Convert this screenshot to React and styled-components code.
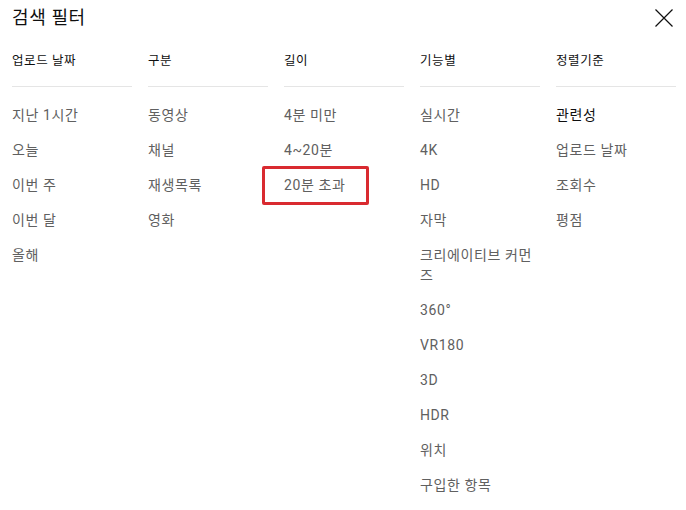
import React from "react";
import styled, { createGlobalStyle } from "styled-components";

const Global = createGlobalStyle`
  html, body { margin: 0; padding: 0; background: #fff; }
  body { font-family: Roboto, "Noto Sans CJK KR", "Noto Sans", sans-serif; }
`;

const Dialog = styled.div`
  width: 686px;
  padding: 0 13px 0 12px;
  box-sizing: border-box;
`;

const TitleRow = styled.div`
  display: flex;
  justify-content: space-between;
  align-items: center;
  height: 36px;
`;

const Title = styled.h2`
  margin: 0;
  font-size: 18px;
  font-weight: 400;
  line-height: 24px;
  letter-spacing: 0.6px;
  color: #0f0f0f;
`;

const CloseButton = styled.button`
  width: 18px;
  height: 18px;
  padding: 0;
  border: 0;
  background: none;
  display: flex;
  cursor: pointer;
`;

const Columns = styled.div`
  display: grid;
  grid-template-columns: repeat(5, 120px);
  column-gap: 16px;
  align-items: start;
`;

const Column = styled.div`
  display: flex;
  flex-direction: column;
`;

const Header = styled.div`
  padding: 16px 0 16px;
  font-size: 12.5px;
  line-height: 18px;
  letter-spacing: 0.6px;
  color: #0f0f0f;
  border-bottom: 1px solid #e5e5e5;
`;

const List = styled.div`
  padding-top: 11px;
  display: flex;
  flex-direction: column;
`;

const Item = styled.div`
  position: relative;
  padding: 7px 0 8px;
  font-size: 14px;
  line-height: 20px;
  letter-spacing: 0.6px;
  color: ${(p) => (p.$selected ? "#0f0f0f" : "#606060")};
  word-break: normal;
`;

const Highlight = styled.span`
  position: absolute;
  left: -22px;
  top: -2px;
  width: 107px;
  height: 39px;
  box-sizing: border-box;
  border: 3px solid #d92a30;
  border-radius: 2px;
  pointer-events: none;
`;

const columns = [
  { title: "업로드 날짜", items: ["지난 1시간", "오늘", "이번 주", "이번 달", "올해"] },
  { title: "구분", items: ["동영상", "채널", "재생목록", "영화"] },
  { title: "길이", items: ["4분 미만", "4~20분", "20분 초과"], highlight: 2 },
  {
    title: "기능별",
    items: ["실시간", "4K", "HD", "자막", "크리에이티브 커먼즈", "360°", "VR180", "3D", "HDR", "위치", "구입한 항목"],
  },
  { title: "정렬기준", items: ["관련성", "업로드 날짜", "조회수", "평점"], selected: 0 },
];

export default function App() {
  return (
    <>
      <Global />
      <Dialog>
        <TitleRow>
          <Title>검색 필터</Title>
          <CloseButton aria-label="닫기">
            <svg width="18" height="18" viewBox="0 0 18 18">
              <path d="M0.5 0.5 L17.5 17.5 M17.5 0.5 L0.5 17.5" stroke="#0f0f0f" strokeWidth="1.2" fill="none" />
            </svg>
          </CloseButton>
        </TitleRow>
        <Columns>
          {columns.map((col) => (
            <Column key={col.title}>
              <Header>{col.title}</Header>
              <List>
                {col.items.map((it, i) => (
                  <Item key={it} $selected={col.selected === i}>
                    {it}
                    {col.highlight === i && <Highlight />}
                  </Item>
                ))}
              </List>
            </Column>
          ))}
        </Columns>
      </Dialog>
    </>
  );
}
